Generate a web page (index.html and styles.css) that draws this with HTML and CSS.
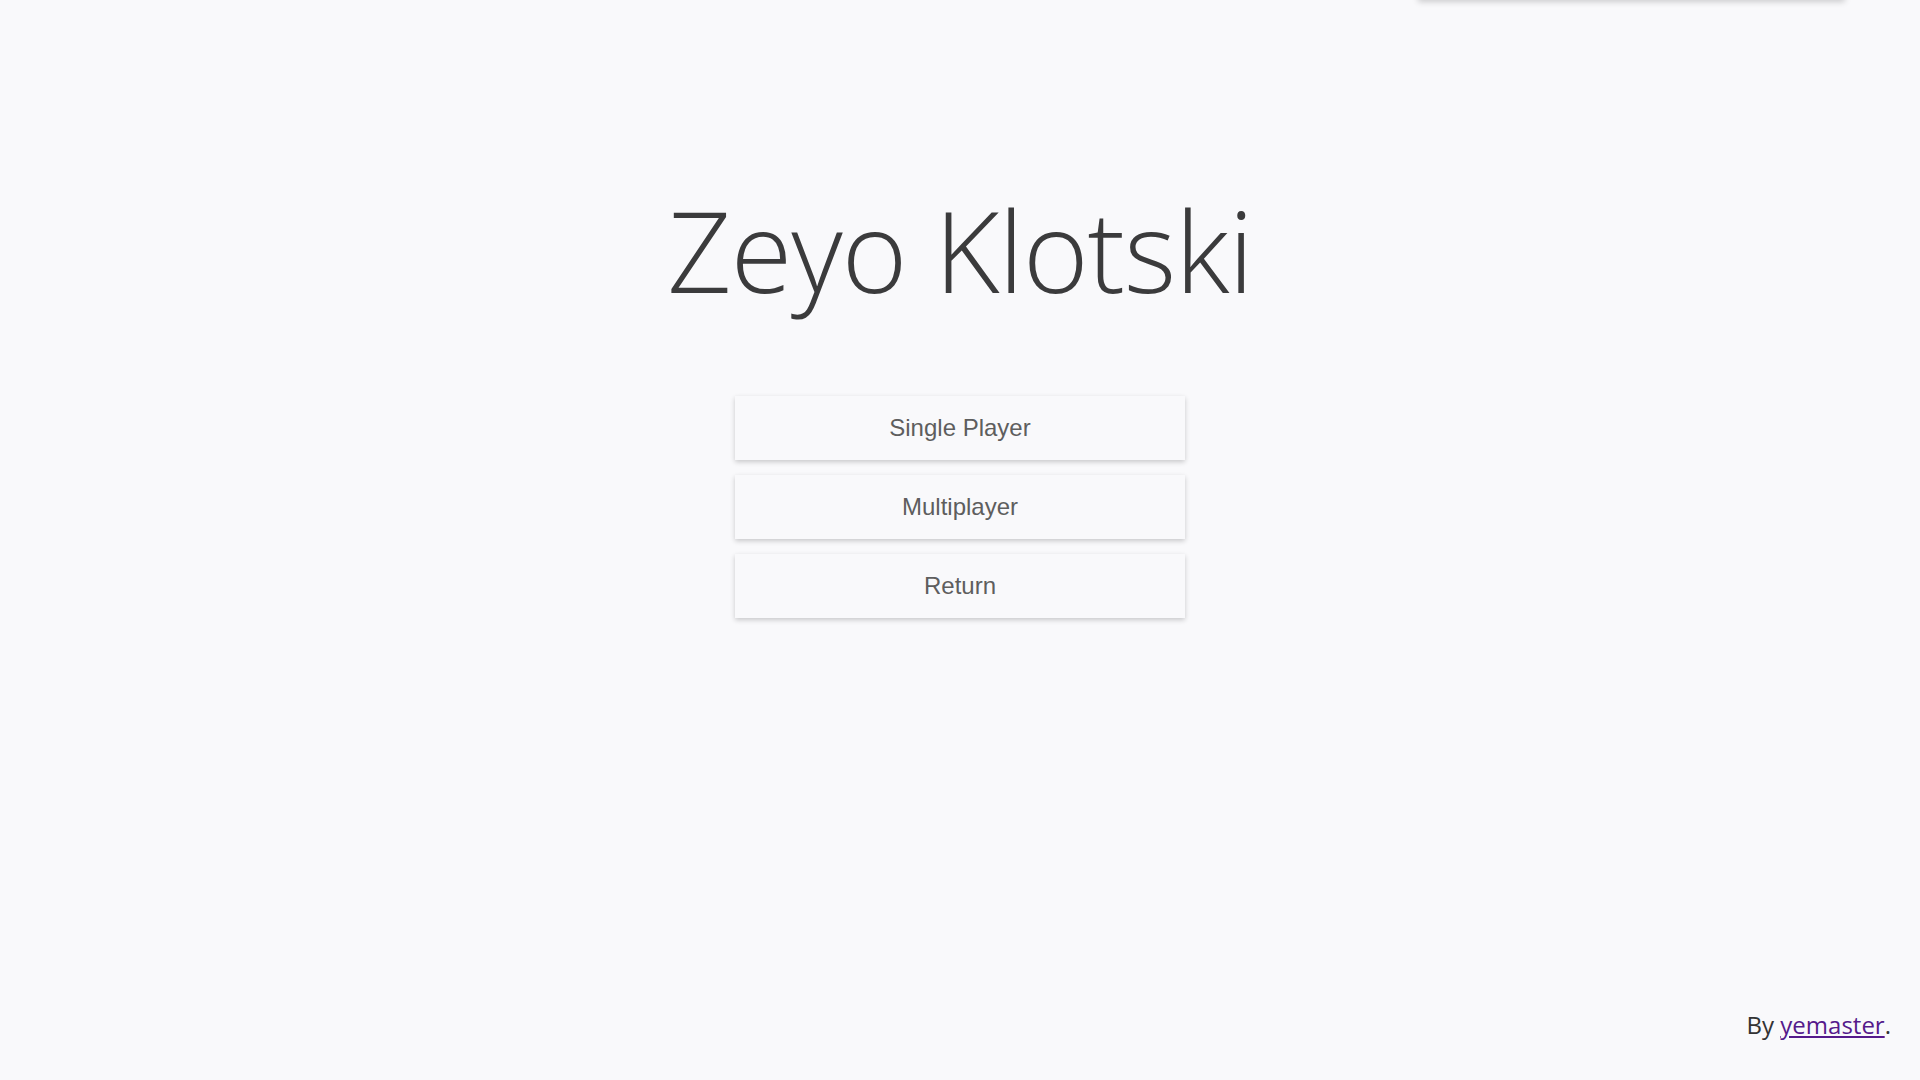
FILE: index.html
```html
<!DOCTYPE html>
<html lang="en">
<head>
<meta charset="utf-8">
<title>Zeyo Klotski</title>
<link rel="stylesheet" href="styles.css">
</head>
<body>
<div class="toast"></div>
<main class="menu">
  <h1 class="title">Zeyo Klotski</h1>
  <div class="buttons">
    <button class="btn">Single Player</button>
    <button class="btn">Multiplayer</button>
    <button class="btn">Return</button>
  </div>
</main>
<footer class="footer">By <a href="#" class="author">yemaster</a>.</footer>
</body>
</html>
```
FILE: styles.css
```css
html, body {
  margin: 0;
  padding: 0;
}
body {
  background: #f9f9fb;
  min-height: 100vh;
  display: flex;
  flex-direction: column;
  font-family: "Open Sans", "Noto Sans", sans-serif;
  overflow: hidden;
  position: relative;
}
.toast {
  position: absolute;
  top: -60px;
  left: 1418px;
  width: 427px;
  height: 60px;
  background: #f9f9fb;
  box-shadow: 0 2px 6px rgba(0,0,0,0.18);
}
.menu {
  display: flex;
  flex-direction: column;
  align-items: center;
  padding-top: 180px;
}
.title {
  margin: 0;
  font-family: "Open Sans", sans-serif;
  font-weight: 300;
  font-size: 112px;
  line-height: 139px;
  color: #3b3b3c;
  letter-spacing: -1px;
}
.buttons {
  display: flex;
  flex-direction: column;
  gap: 15px;
  margin-top: 77px;
}
.btn {
  width: 450px;
  height: 64px;
  border: none;
  background: #f9f9fb;
  box-shadow: 0 2px 5px rgba(0,0,0,0.2);
  font-family: "Liberation Sans", Arial, sans-serif;
  font-size: 24px;
  color: #5e5e5e;
  cursor: pointer;
  padding: 0;
}
.footer {
  margin-top: auto;
  align-self: flex-end;
  padding: 0 29px 39px 0;
  font-family: "Open Sans", sans-serif;
  font-size: 24px;
  color: #333;
}
.author {
  color: #551a8b;
}
```
